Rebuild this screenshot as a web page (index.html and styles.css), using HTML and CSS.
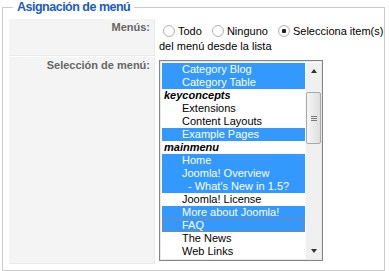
FILE: index.html
```html
<!DOCTYPE html>
<html lang="es">
<head>
  <meta charset="UTF-8">
  <title>Asignación de menú</title>
  <link rel="stylesheet" href="styles.css">
</head>
<body>

  <fieldset class="adminform">
    <legend>Asignación de menú</legend>

    <div class="admintable">
      <!-- Menus -->
      <div class="key">Menús:</div>
      <div class="value radios">
        <label><input type="radio" name="menus">Todo</label>
        <label><input type="radio" name="menus">Ninguno</label>
        <label><input type="radio" name="menus" checked>Selecciona item(s)<br>del menú desde la lista</label>
      </div>

      <!-- Menu selection -->
      <div class="key">Selección de menú:</div>
      <div class="value">
        <div class="listbox">
          <ul class="options">
            <li class="opt selected">Category Blog</li>
            <li class="opt selected">Category Table</li>
            <li class="group">keyconcepts</li>
            <li class="opt">Extensions</li>
            <li class="opt">Content Layouts</li>
            <li class="opt selected">Example Pages</li>
            <li class="group">mainmenu</li>
            <li class="opt selected">Home</li>
            <li class="opt selected">Joomla! Overview</li>
            <li class="opt sub selected">- What's New in 1.5?</li>
            <li class="opt">Joomla! License</li>
            <li class="opt selected">More about Joomla!</li>
            <li class="opt selected focus">FAQ</li>
            <li class="opt">The News</li>
            <li class="opt">Web Links</li>
          </ul>
          <div class="scrollbar">
            <div class="arrow up"></div>
            <div class="track">
              <div class="thumb"><span class="grip"></span></div>
            </div>
            <div class="arrow down"></div>
          </div>
        </div>
      </div>
    </div>
  </fieldset>

</body>
</html>
```

FILE: styles.css
```css
body {
  margin: 0;
  font-family: "Liberation Sans", Arial, sans-serif;
  font-size: 11px;
  color: #000;
  background: #fff;
}
.adminform {
  margin: 0 4px 0 2px;
  padding: 4px 3px 6px 6px;
  border: 1px solid #ccc;
  min-inline-size: 0;
}
.adminform legend {
  margin-left: 4px;
  padding: 0 4px;
  font-size: 12.5px;
  line-height: 15px;
  font-weight: bold;
  letter-spacing: -0.5px;
  color: #1a5ac8;
}
.admintable {
  display: grid;
  grid-template-columns: 146px 1fr;
  column-gap: 1px;
  row-gap: 1px;
}
.key {
  background-color: #f4f4f4;
  border-right: 1px solid #e9e9e9;
  border-bottom: 1px solid #e9e9e9;
  color: #666;
  font-weight: bold;
  text-align: right;
  padding: 2px 4px;
  line-height: 13px;
}
.value {
  padding: 3px;
  line-height: 15px;
  white-space: nowrap;
}
.value.radios {
  padding: 5px 3px 2px;
}
.value label {
  margin-right: 3px;
}
.value input[type="radio"] {
  appearance: none;
  -webkit-appearance: none;
  width: 12px;
  height: 12px;
  margin: 0 3px 0 4px;
  vertical-align: -2px;
  border: 1px solid #b4b4b4;
  border-radius: 50%;
  background: radial-gradient(circle at 40% 40%, #fff 45%, #ececec 100%);
}
.value input[type="radio"]:checked {
  background: radial-gradient(circle, #222 0 2px, #fff 2.5px 45%, #ececec 100%);
}

/* listbox drawn by hand */
.listbox {
  display: flex;
  box-sizing: border-box;
  width: 164px;
  height: 201px;
  border: 1px solid #858585;
  padding: 2px 1px 1px 2px;
  background: #fff;
  box-shadow: inset 0 0 0 1px #e8e8e8;
}
.options {
  flex: 1;
  margin: 0;
  padding: 0;
  list-style: none;
  overflow: hidden;
}
.options li {
  height: 13px;
  line-height: 13px;
  box-sizing: border-box;
}
.group {
  padding-left: 2px;
  font-weight: bold;
  font-style: italic;
}
.opt {
  padding-left: 20px;
}
.opt.sub {
  padding-left: 26px;
}
.opt.selected {
  background: #3399ff;
  color: #fff;
}
.opt.focus {
  outline: 1px dotted #c8772c;
  outline-offset: -1px;
}
.scrollbar {
  width: 16px;
  display: flex;
  flex-direction: column;
  background: #f0f0f0;
  border-left: 1px solid #fafafa;
  box-sizing: border-box;
}
.arrow {
  height: 16px;
  display: flex;
  align-items: center;
  justify-content: center;
}
.arrow::before {
  content: "";
  border-left: 3.5px solid transparent;
  border-right: 3.5px solid transparent;
}
.arrow.up::before {
  border-bottom: 4px solid #333;
}
.arrow.down::before {
  border-top: 4px solid #333;
}
.track {
  flex: 1;
  padding-top: 13px;
}
.thumb {
  height: 50px;
  border: 1px solid #a9a9a9;
  border-radius: 2px;
  background: linear-gradient(to right, #f6f6f6, #dedede);
  display: flex;
  align-items: center;
  justify-content: center;
}
.grip {
  width: 6px;
  height: 5px;
  background: repeating-linear-gradient(to bottom, #7a7a7a 0 1px, transparent 1px 2px);
}
```
